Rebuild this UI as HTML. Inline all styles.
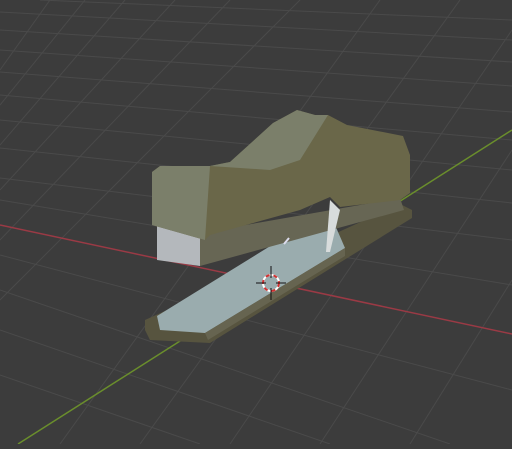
<!DOCTYPE html>
<html><head><style>html,body{margin:0;padding:0;background:#3c3c3c;overflow:hidden}</style></head><body>
<svg width="512" height="444" viewBox="0 0 512 444" xmlns="http://www.w3.org/2000/svg">
<rect width="512" height="444" fill="#3c3c3c"/>
<g stroke="#4a4a4a" stroke-width="1">
<line x1="0" y1="95" x2="512" y2="140"/>
<line x1="0" y1="120" x2="512" y2="170"/>
<line x1="0" y1="148" x2="512" y2="203"/>
<line x1="0" y1="178" x2="512" y2="240"/>
<line x1="0" y1="200" x2="512" y2="285"/>
<line x1="0" y1="255" x2="512" y2="390"/>
<line x1="0" y1="290" x2="450" y2="444"/>
<line x1="0" y1="330" x2="330" y2="444"/>
<line x1="0" y1="375" x2="200" y2="444"/>
<line x1="0" y1="72" x2="512" y2="112"/>
<line x1="0" y1="50" x2="512" y2="86"/>
<line x1="0" y1="30" x2="512" y2="62"/>
<line x1="0" y1="12" x2="512" y2="40"/>
<line x1="40" y1="0" x2="512" y2="20"/>
<line x1="0" y1="300" x2="300" y2="0"/>
<line x1="0" y1="240" x2="230" y2="0"/>
<line x1="0" y1="190" x2="175" y2="0"/>
<line x1="0" y1="145" x2="125" y2="0"/>
<line x1="0" y1="105" x2="85" y2="0"/>
<line x1="0" y1="70" x2="50" y2="0"/>
<line x1="60" y1="444" x2="380" y2="0"/>
<line x1="140" y1="444" x2="460" y2="0"/>
<line x1="230" y1="444" x2="512" y2="30"/>
<line x1="320" y1="444" x2="512" y2="150"/>
<line x1="410" y1="444" x2="512" y2="280"/>
</g>
<line x1="0" y1="225" x2="512" y2="334" stroke="#9a3a45" stroke-width="1.5"/>
<line x1="18" y1="444" x2="512" y2="130" stroke="#6a8e2c" stroke-width="1.5"/>
<polygon points="145,320 400,204 412,210 412,218 210,343 150,340 145,330" fill="#57543f"/>
<polygon points="157,316 280,240 335,225 345,248 205,333 160,330" fill="#9aacae"/>
<polygon points="205,333 345,248 345,256 208,340" fill="#666450"/>
<polygon points="157,223 200,233 200,266 157,260" fill="#b4b8bc"/>
<polygon points="200,233 400,198 404,210 200,266" fill="#676654"/>
<polygon points="152,172 160,166 210,166 230,162 273,123 297,110 315,115 328,115 347,125 403,136 410,155 410,193 400,200 340,207 330,197 300,210 210,235 205,240 152,225" fill="#6a6749"/>
<polygon points="152,172 160,166 210,166 230,162 273,123 297,110 315,115 328,115 300,160 270,170 210,166 205,240 152,225" fill="#7b7f6a"/>
<polygon points="330,200 340,210 330,252 326,252" fill="#d8dcdc"/>
<line x1="284" y1="244" x2="289" y2="238" stroke="#dde" stroke-width="2"/>
<circle cx="271" cy="283" r="8" fill="none" stroke="#fff" stroke-width="2"/>
<circle cx="271" cy="283" r="8" fill="none" stroke="#d03030" stroke-width="2" stroke-dasharray="4 4"/>
<g stroke="#111" stroke-width="1"><line x1="271" y1="266" x2="271" y2="278"/><line x1="271" y1="288" x2="271" y2="300"/><line x1="256" y1="283" x2="266" y2="283"/><line x1="276" y1="283" x2="286" y2="283"/></g>
</svg>
</body></html>
